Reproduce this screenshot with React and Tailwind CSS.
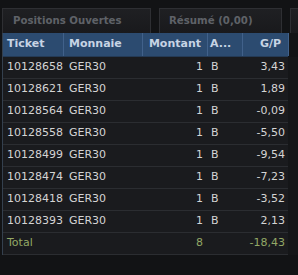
import React from 'react';

const rows = [
  { ticket: '10128658', pair: 'GER30', amount: 1, side: 'B', pl: '3,43' },
  { ticket: '10128621', pair: 'GER30', amount: 1, side: 'B', pl: '1,89' },
  { ticket: '10128564', pair: 'GER30', amount: 1, side: 'B', pl: '-0,09' },
  { ticket: '10128558', pair: 'GER30', amount: 1, side: 'B', pl: '-5,50' },
  { ticket: '10128499', pair: 'GER30', amount: 1, side: 'B', pl: '-9,54' },
  { ticket: '10128474', pair: 'GER30', amount: 1, side: 'B', pl: '-7,23' },
  { ticket: '10128418', pair: 'GER30', amount: 1, side: 'B', pl: '-3,52' },
  { ticket: '10128393', pair: 'GER30', amount: 1, side: 'B', pl: '2,13' }
];

const cols = 'grid grid-cols-[61px_79px_65px_35px_46px]';

const App = () => {
  return (
    <div className="w-[298px] h-[275px] overflow-hidden bg-[#121315] font-['DejaVu_Sans',sans-serif] text-[11px]">
      {/* Tabs */}
      <div className="flex items-end gap-[8px] pt-[8px] pl-[2px] h-[33px] text-[10.2px]">
        <div className="w-[149px] h-[25px] flex items-center pl-[10px] bg-gradient-to-b from-[#1f2023] to-[#19191c] border border-b-0 border-[#2e2f33] text-[#5f6268] font-bold">
          Positions Ouvertes
        </div>
        <div className="w-[123px] h-[25px] flex items-center pl-[9px] bg-gradient-to-b from-[#1f2023] to-[#19191c] border border-b-0 border-[#2e2f33] text-[#5f6268] font-bold">
          Résumé (0,00)
        </div>
        <div className="flex-1 h-[25px] bg-gradient-to-b from-[#1f2023] to-[#19191c] border border-b-0 border-r-0 border-[#2e2f33]" />
      </div>

      <div className="flex">
        <div className="w-[286px] ml-[2px] border-l border-[#34404e]">
          {/* Header */}
          <div className={`${cols} h-[24px] bg-[#2c4b70] text-[#c7d4e4] font-bold border-b border-[#243a55]`}>
            <div className="flex items-center pl-[4px] border-r border-[#41618a]">Ticket</div>
            <div className="flex items-center pl-[5px] border-r border-[#41618a]">Monnaie</div>
            <div className="flex items-center justify-end pr-[6px] border-r border-[#41618a]">Montant</div>
            <div className="flex items-center pl-[2px] border-r border-[#41618a]">A...</div>
            <div className="flex items-center justify-end pr-[7px] border-r border-[#41618a]">G/P</div>
          </div>

          {/* Rows */}
          {rows.map((r) => (
            <div key={r.ticket} className={`${cols} h-[22px] bg-[#1a1b1e] text-[#d4d4d4] border-b border-[#2b2d31]`}>
              <div className="flex items-center pl-[4px]">{r.ticket}</div>
              <div className="flex items-center pl-[5px]">{r.pair}</div>
              <div className="flex items-center justify-end pr-[5px]">{r.amount}</div>
              <div className="flex items-center pl-[3px]">{r.side}</div>
              <div className="flex items-center justify-end pr-[4px]">{r.pl}</div>
            </div>
          ))}

          {/* Total */}
          <div className={`${cols} h-[22px] bg-[#1a1b1e] text-[#93a866] border-b border-[#2b2d31]`}>
            <div className="flex items-center pl-[4px]">Total</div>
            <div />
            <div className="flex items-center justify-end pr-[5px]">8</div>
            <div />
            <div className="flex items-center justify-end pr-[4px]">-18,43</div>
          </div>
        </div>
        <div className="flex-1 mt-[24px] bg-[#151618]" />
      </div>
    </div>
  );
};

export default App;
